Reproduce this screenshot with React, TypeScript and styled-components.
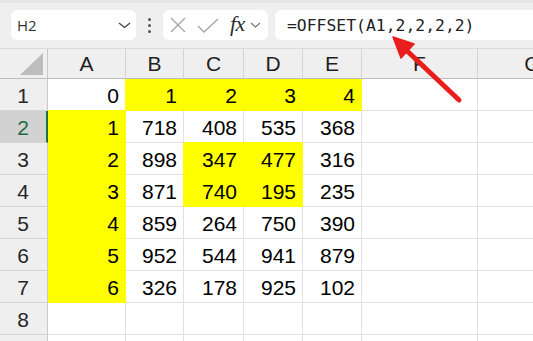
import React from "react";
import styled, { createGlobalStyle } from "styled-components";

const GlobalStyle = createGlobalStyle`
  html, body { margin: 0; padding: 0; background: #ffffff; }
  body { font-family: "Liberation Sans", Arial, sans-serif; overflow: hidden; }
  * { box-sizing: border-box; }
`;

const YELLOW = "#ffff00";
const GRID = "#e0e0e0";

const Page = styled.div`
  position: relative;
  width: 533px;
  height: 341px;
  overflow: hidden;
  background: #ffffff;
`;

const Toolbar = styled.div`
  height: 49px;
  display: flex;
  align-items: flex-start;
  padding: 7px 0 0 11px;
  background: #efefef;
  border-top: 3px solid #e4e4e4;
  border-bottom: 1px solid #dadada;
`;

const Box = styled.div<{ $w?: number }>`
  height: 30px;
  background: #ffffff;
  border-radius: 6px;
  display: flex;
  align-items: center;
  ${(p) => (p.$w ? `width: ${p.$w}px; flex: none;` : `flex: 1; margin-right: -14px;`)}
`;

const NameText = styled.span`
  flex: 1;
  padding-left: 6px;
  font-family: "Open Sans", "Noto Sans", sans-serif;
  font-size: 15px;
  color: #333333;
`;

const Chevron = styled.svg`
  flex: none;
`;

const DotsArea = styled.div`
  width: 27px;
  height: 30px;
  display: flex;
  flex-direction: column;
  align-items: center;
  justify-content: center;
  gap: 3px;
`;

const Dot = styled.span`
  width: 3px;
  height: 3px;
  border-radius: 50%;
  background: #555555;
`;

const FxGlyph = styled.span`
  font-family: "Liberation Serif", "Times New Roman", serif;
  font-style: italic;
  font-size: 22px;
  color: #2b2b2b;
  margin: -3px 0 0 9px;
  letter-spacing: -0.5px;
`;

const FormulaText = styled.span`
  padding-left: 12px;
  font-family: "DejaVu Sans Mono", "Liberation Mono", monospace;
  font-size: 16.4px;
  color: #222222;
  white-space: nowrap;
`;

const Sheet = styled.div`
  display: grid;
  grid-template-columns: 48px 78px 58px 60px 59px 59px 116px 110px;
  grid-template-rows: 30px;
  grid-auto-rows: 32px;
`;

const Corner = styled.div`
  position: relative;
  background: #efefef;
  border-right: 1px solid #c8c8c8;
  border-bottom: 1px solid #bdbdbd;
  &::after {
    content: "";
    position: absolute;
    right: 4px;
    bottom: 3px;
    width: 0;
    height: 0;
    border-left: 23px solid transparent;
    border-bottom: 22px solid #bdbdbd;
  }
`;

const ColHeader = styled.div`
  background: #efefef;
  border-right: 1px solid #d4d4d4;
  border-bottom: 1px solid #bdbdbd;
  display: flex;
  align-items: center;
  justify-content: center;
  font-size: 21px;
  color: #1f1f1f;
  padding-top: 1px;
`;

const RowHeader = styled.div<{ $selected?: boolean }>`
  background: ${(p) => (p.$selected ? "#d2d2d2" : "#efefef")};
  border-right: ${(p) => (p.$selected ? "2px solid #1e7145" : "1px solid #c8c8c8")};
  border-bottom: 1px solid #d4d4d4;
  display: flex;
  align-items: center;
  justify-content: center;
  font-size: 21px;
  color: ${(p) => (p.$selected ? "#1e6b41" : "#262626")};
  padding: 2px ${(p) => (p.$selected ? "0" : "1px")} 0 0;
`;

const Cell = styled.div<{ $fill?: boolean; $br: string; $bb: string }>`
  background: ${(p) => (p.$fill ? YELLOW : "#ffffff")};
  border-right: 1px solid ${(p) => p.$br};
  border-bottom: 1px solid ${(p) => p.$bb};
  display: flex;
  align-items: center;
  justify-content: flex-end;
  padding: 3px 6px 0 0;
  font-size: 21px;
  color: #000000;
`;

const ArrowLayer = styled.svg`
  position: absolute;
  left: 0;
  top: 0;
  pointer-events: none;
`;

const cols = ["A", "B", "C", "D", "E", "F", "G"];

const data: (string | number)[][] = [
  [0, 1, 2, 3, 4],
  [1, 718, 408, 535, 368],
  [2, 898, 347, 477, 316],
  [3, 871, 740, 195, 235],
  [4, 859, 264, 750, 390],
  [5, 952, 544, 941, 879],
  [6, 326, 178, 925, 102],
  [],
  [],
];

const isYellow = (r: number, c: number) => {
  if (r === 0 && c >= 1 && c <= 4) return true;
  if (c === 0 && r >= 1 && r <= 6) return true;
  if ((r === 2 || r === 3) && (c === 2 || c === 3)) return true;
  return false;
};

export default function App() {
  return (
    <Page>
      <GlobalStyle />
      <Toolbar>
        <Box $w={125}>
          <NameText>H2</NameText>
          <Chevron width="20" height="10" viewBox="0 0 20 10">
            <polyline points="3,3 8.5,7.5 14,3" fill="none" stroke="#444" strokeWidth="1.3" />
          </Chevron>
        </Box>
        <DotsArea>
          <Dot />
          <Dot />
          <Dot />
        </DotsArea>
        <Box $w={105}>
          <svg width="34" height="30" viewBox="0 0 34 30" style={{ flex: "none" }}>
            <line x1="8" y1="8" x2="22" y2="22" stroke="#a3a3a3" strokeWidth="1.3" />
            <line x1="22" y1="8" x2="8" y2="22" stroke="#a3a3a3" strokeWidth="1.3" />
          </svg>
          <svg width="24" height="30" viewBox="0 0 24 30" style={{ flex: "none" }}>
            <polyline points="1,16 7,22 21,9" fill="none" stroke="#a3a3a3" strokeWidth="1.3" />
          </svg>
          <FxGlyph>fx</FxGlyph>
          <Chevron width="16" height="10" viewBox="0 0 16 10" style={{ marginLeft: 3 }}>
            <polyline points="3,3 7.5,7 12,3" fill="none" stroke="#777" strokeWidth="1.2" />
          </Chevron>
        </Box>
        <div style={{ width: 7, flex: "none" }} />
        <Box>
          <FormulaText>=OFFSET(A1,2,2,2,2)</FormulaText>
        </Box>
      </Toolbar>
      <Sheet>
        <Corner />
        {cols.map((c) => (
          <ColHeader key={c}>{c}</ColHeader>
        ))}
        {data.map((row, r) => (
          <React.Fragment key={r}>
            <RowHeader $selected={r === 1}>{r < 8 ? r + 1 : ""}</RowHeader>
            {cols.map((_, c) => {
              const fill = isYellow(r, c);
              const br = fill || isYellow(r, c + 1) ? YELLOW : GRID;
              const bb = fill || isYellow(r + 1, c) ? YELLOW : GRID;
              return (
                <Cell key={c} $fill={fill} $br={br} $bb={bb}>
                  {row[c] !== undefined ? row[c] : ""}
                </Cell>
              );
            })}
          </React.Fragment>
        ))}
      </Sheet>
      <ArrowLayer width="533" height="341" viewBox="0 0 533 341">
        <line x1="459" y1="100" x2="404" y2="48" stroke="#ea1d1d" strokeWidth="5" strokeLinecap="round" />
        <polygon points="393,37 414,44 401,58" fill="#ea1d1d" stroke="#ea1d1d" strokeWidth="1.5" strokeLinejoin="round" />
      </ArrowLayer>
    </Page>
  );
}
